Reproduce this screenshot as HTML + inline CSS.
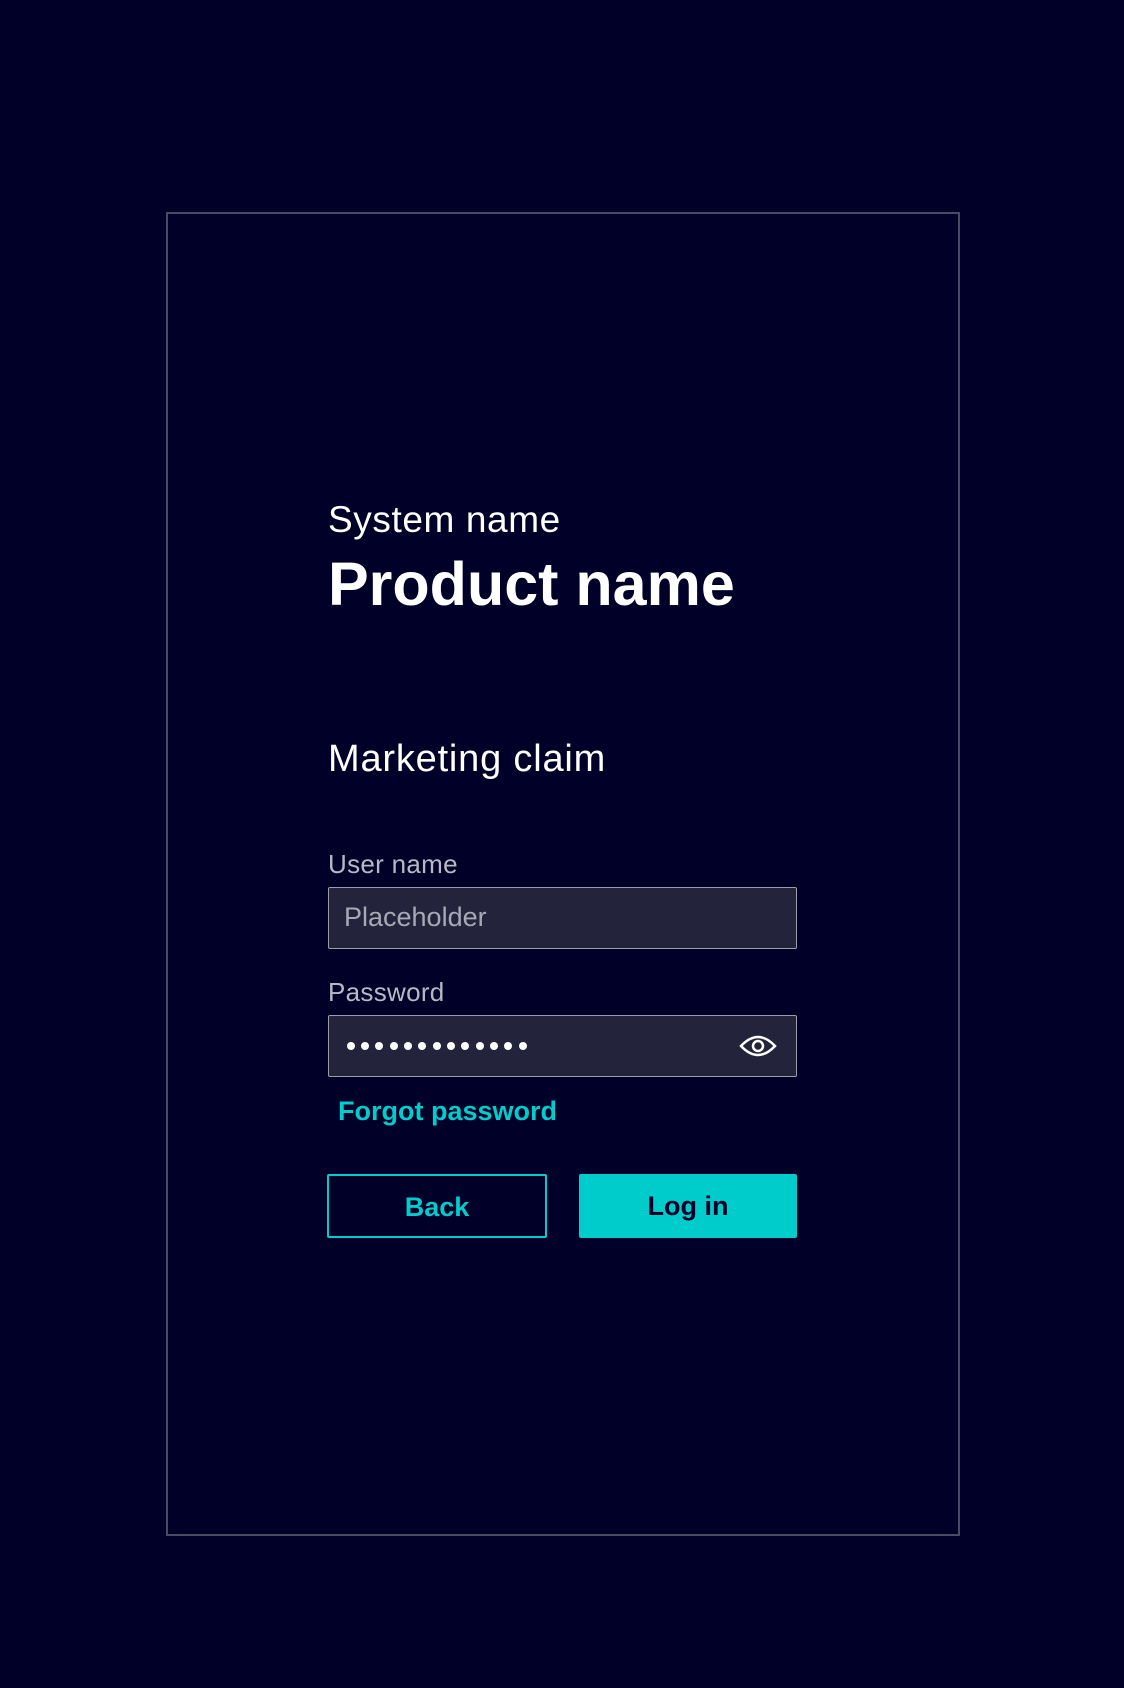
<!DOCTYPE html>
<html><head><style>
body{margin:0;width:1124px;height:1688px;background:#000028;font-family:"Liberation Sans",sans-serif;position:relative;overflow:hidden;color:#fff}
.box{position:absolute;left:166px;top:212px;width:790px;height:1320px;border:2px solid #4a4a62}
.a{position:absolute;white-space:nowrap}
.inp{position:absolute;left:328px;width:467px;height:60px;background:#23233c;border:1px solid #9d9daa;border-radius:2px}
.btn{position:absolute;top:1174px;height:64px;width:220px;box-sizing:border-box;border-radius:2px;text-align:center;line-height:62px;font-weight:bold;font-size:27px}
.dot{position:absolute;top:1042px;width:8px;height:8px;border-radius:50%;background:#fff}
</style></head><body>
<div class="box"></div>
<div class="a" style="left:328px;top:499px;font-size:37px;letter-spacing:0.6px">System name</div>
<div class="a" style="left:328px;top:549px;font-size:61px;font-weight:bold;">Product name</div>
<div class="a" style="left:328px;top:738px;font-size:38px;letter-spacing:0.8px">Marketing claim</div>
<div class="a" style="left:328px;top:849px;font-size:26px;color:#b8b8c4;letter-spacing:0.3px">User name</div>
<div class="inp" style="top:887px"></div>
<div class="a" style="left:344px;top:902px;font-size:27px;color:#a8a8b6">Placeholder</div>
<div class="a" style="left:328px;top:977px;font-size:26px;color:#b8b8c4;letter-spacing:0.3px">Password</div>
<div class="inp" style="top:1015px"></div>
<div class="dot" style="left:347px"></div><div class="dot" style="left:361px"></div><div class="dot" style="left:375px"></div><div class="dot" style="left:390px"></div><div class="dot" style="left:404px"></div><div class="dot" style="left:418px"></div><div class="dot" style="left:433px"></div><div class="dot" style="left:447px"></div><div class="dot" style="left:461px"></div><div class="dot" style="left:476px"></div><div class="dot" style="left:490px"></div><div class="dot" style="left:504px"></div><div class="dot" style="left:519px"></div>
<svg style="position:absolute;left:738px;top:1030px" width="40" height="32" viewBox="0 0 40 32"><path d="M3 16 Q20 -2 37 16 Q20 34 3 16 Z" fill="none" stroke="#fff" stroke-width="2.5"/><circle cx="20" cy="16" r="5" fill="none" stroke="#fff" stroke-width="2.5"/></svg>
<div class="a" style="left:338px;top:1096px;font-size:27px;font-weight:bold;color:#00cccc">Forgot password</div>
<div class="btn" style="left:327px;border:2px solid #00cccc;color:#00cccc">Back</div>
<div class="btn" style="left:579px;width:218px;background:#00cccc;color:#000028;line-height:64px">Log in</div>
</body></html>
